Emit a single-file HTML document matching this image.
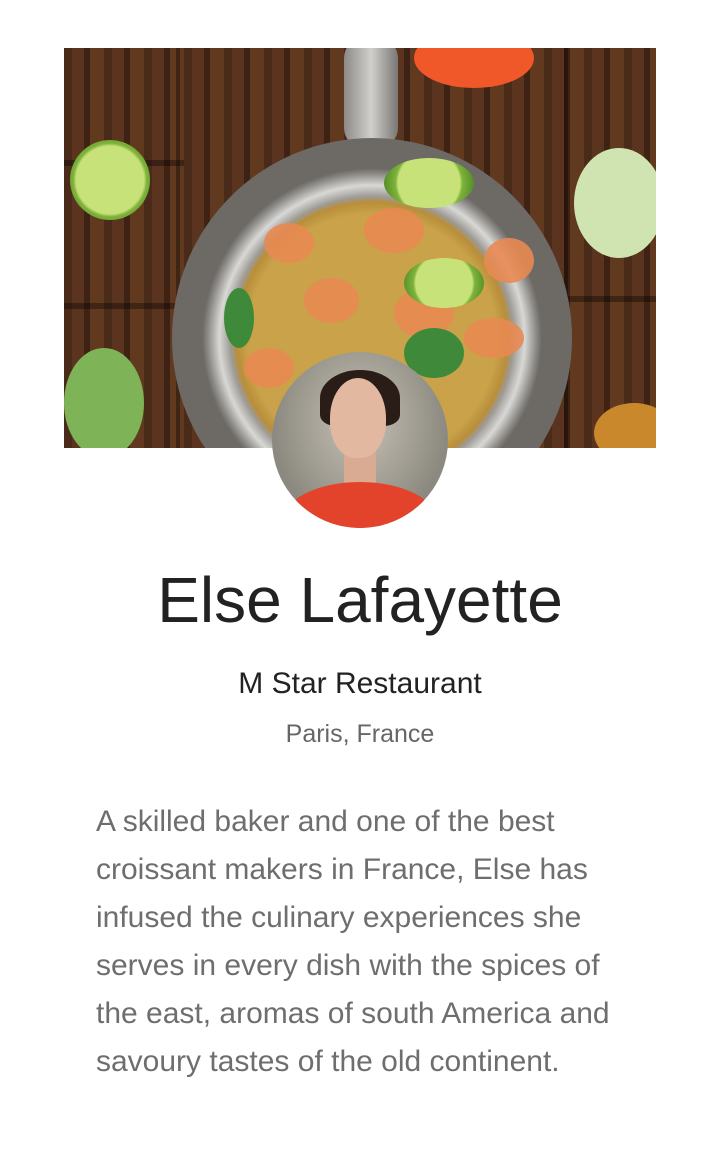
<!DOCTYPE html>
<html><head><meta charset="utf-8"><style>
html,body{margin:0;padding:0;background:#fff;width:720px;height:1168px;overflow:hidden}
body{position:relative;font-family:"Liberation Sans",sans-serif}
.photo{position:absolute;left:64px;top:48px;width:592px;height:400px;overflow:hidden;
background:repeating-linear-gradient(90deg,#4a2a18 0 8px,#5a341f 8px 20px,#3e2213 20px 26px,#61391f 26px 40px);}
.plank{position:absolute;background:rgba(0,0,0,.35)}
.pan{position:absolute;left:108px;top:90px;width:400px;height:400px;border-radius:50%;
background:radial-gradient(circle,#c9a24a 0 44%,#b98e3a 48%,#9d9a94 50%,#d8d8d6 54%,#8e8c88 58%,#6d6a66 60%)}
.handle{position:absolute;left:280px;top:-10px;width:54px;height:110px;border-radius:20px;background:linear-gradient(90deg,#8c8a86,#d0cfcb,#7a7874)}
.s{position:absolute;border-radius:50%;background:#e88a52;opacity:.9}
.g{position:absolute;background:#3f8a3a;border-radius:50%}
.lime{position:absolute;border-radius:50%;background:radial-gradient(circle,#c8e27a 0 60%,#7eb33a 65%,#3d7a22 100%)}
.av{position:absolute;left:272px;top:352px;width:176px;height:176px;border-radius:50%;overflow:hidden;
background:radial-gradient(ellipse at 50% 40%,#c7c1b6,#8c8a80 70%)}
.face{position:absolute;left:58px;top:26px;width:56px;height:80px;border-radius:50% 50% 45% 45%;background:#e2b8a0}
.hair{position:absolute;left:48px;top:18px;width:80px;height:56px;border-radius:50% 50% 20% 20%;background:#2a1d18}
.neck{position:absolute;left:72px;top:96px;width:32px;height:40px;background:#d9ab92}
.shirt{position:absolute;left:10px;top:130px;width:156px;height:80px;border-radius:50% 50% 0 0;background:#e2432a}
h1{position:absolute;top:560px;left:0;width:720px;margin:0;text-align:center;font-weight:normal;font-size:64px;color:#222;line-height:80px}
.r{position:absolute;top:664px;width:720px;text-align:center;font-size:30px;color:#222;line-height:40px}
.l{position:absolute;top:716px;width:720px;text-align:center;font-size:25px;color:#666;line-height:36px}
p{position:absolute;top:798px;left:96px;width:620px;margin:0;font-size:30px;line-height:48px;color:#6e6e6e;white-space:nowrap}
</style></head><body>
<div class="photo">
<div class="plank" style="left:0;top:112px;width:120px;height:6px"></div>
<div class="plank" style="left:0;top:255px;width:120px;height:6px"></div>
<div class="plank" style="left:500px;top:248px;width:92px;height:6px"></div>
<div class="plank" style="left:112px;top:0;width:4px;height:400px"></div>
<div class="plank" style="left:500px;top:0;width:4px;height:400px"></div>
<div class="handle"></div>
<div class="pan"></div>
<div class="s" style="left:200px;top:175px;width:50px;height:40px"></div>
<div class="s" style="left:300px;top:160px;width:60px;height:45px"></div>
<div class="s" style="left:240px;top:230px;width:55px;height:45px"></div>
<div class="s" style="left:330px;top:240px;width:60px;height:50px"></div>
<div class="s" style="left:420px;top:190px;width:50px;height:45px"></div>
<div class="s" style="left:400px;top:270px;width:60px;height:40px"></div>
<div class="s" style="left:180px;top:300px;width:50px;height:40px"></div>
<div class="g" style="left:340px;top:280px;width:60px;height:50px"></div>
<div class="g" style="left:160px;top:240px;width:30px;height:60px"></div>
<div class="lime" style="left:320px;top:110px;width:90px;height:50px"></div>
<div class="lime" style="left:340px;top:210px;width:80px;height:50px"></div>
<div class="lime" style="left:6px;top:92px;width:80px;height:80px"></div>
<div class="g" style="left:0;top:300px;width:80px;height:110px;background:#7fb357"></div>
<div class="g" style="left:510px;top:100px;width:90px;height:110px;background:#cfe4b0"></div>
<div style="position:absolute;left:350px;top:-20px;width:120px;height:60px;border-radius:50%;background:#f0582a"></div>
<div style="position:absolute;left:530px;top:355px;width:80px;height:60px;border-radius:50%;background:#c9882c"></div>
</div>
<div class="av"><div class="hair"></div><div class="neck"></div><div class="face"></div><div class="shirt"></div></div>
<h1>Else Lafayette</h1>
<div class="r">M Star Restaurant</div>
<div class="l">Paris, France</div>
<p>A skilled baker and one of the best<br>croissant makers in France, Else has<br>infused the culinary experiences she<br>serves in every dish with the spices of<br>the east, aromas of south America and<br>savoury tastes of the old continent.</p>
</body></html>
